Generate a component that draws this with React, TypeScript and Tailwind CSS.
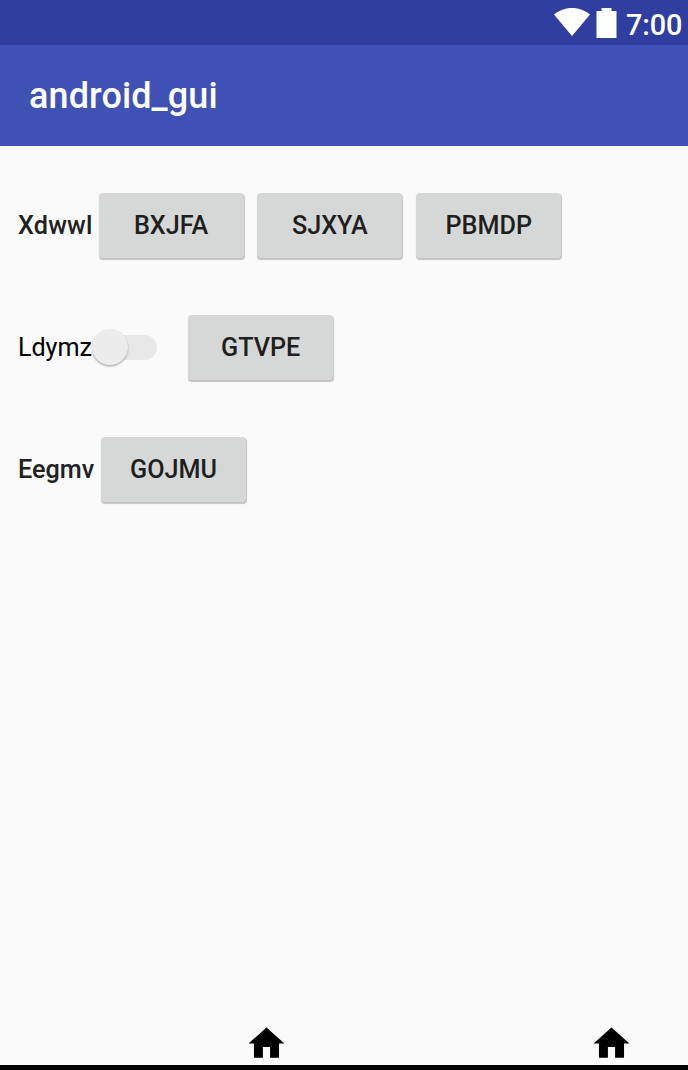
import React from 'react';

function Button({ label, className = '' }: { label: string; className?: string }) {
  return (
    <button
      className={`flex h-[65px] w-[145px] shrink-0 items-center justify-center rounded-[4px] bg-[#d6d8d7] text-[25.2px] leading-none font-medium text-[#1f1f1f] shadow-[0.5px_1.5px_1px_rgba(0,0,0,0.22)] ${className}`}
    >
      {label}
    </button>
  );
}

function Label({ text, className }: { text: string; className: string }) {
  return <span className={`shrink-0 text-[25.2px] leading-none ${className}`}>{text}</span>;
}

function HomeIcon() {
  return (
    <svg className="mt-[0.4px] h-[43px] w-[43px]" viewBox="0 0 24 24" fill="#000">
      <path d="M10 20v-6h4v6h5v-8h3L12 3 2 12h3v8z" />
    </svg>
  );
}

export default function App() {
  return (
    <div className="flex h-[1070px] w-[688px] flex-col overflow-hidden bg-[#fafafa] font-['Roboto',sans-serif]">
      <div className="flex h-[45px] shrink-0 items-start justify-end bg-[#303f9f] pr-[6px] text-white">
        <svg className="mt-[8px] h-[28px] w-[36px]" viewBox="0 0 36 28" fill="currentColor">
          <path d="M0 6.5C5 2.4 11 0 18 0s13 2.4 18 6.5L18 28z" />
        </svg>
        <svg className="mt-[8px] ml-[6px] h-[30px] w-[21px]" viewBox="0 0 21 30" fill="currentColor">
          <path d="M5.5 0h10v3h5v27H.5V3h5z" />
        </svg>
        <span className="mt-[11px] ml-[9px] w-[56px] text-[28.8px] leading-[29px] font-medium tracking-[-0.1px]">7:00</span>
      </div>
      <header className="flex h-[101px] shrink-0 items-center bg-[#3f51b5] pl-[29px]">
        <h1 className="text-[36px] leading-none font-medium tracking-[0.1px] text-white">android_gui</h1>
      </header>
      <main className="flex flex-1 flex-col gap-[57px] pt-[47px] pl-[18px]">
        <div className="flex h-[65px] items-center">
          <Label text="Xdwwl" className="w-[81px] font-medium tracking-[0.2px] text-[#212121]" />
          <Button label="BXJFA" className="pr-[1px]" />
          <Button label="SJXYA" className="ml-[13.400px]" />
          <Button label="PBMDP" className="ml-[13.400px] pl-[1px]" />
        </div>
        <div className="flex h-[65px] items-center">
          <Label text="Ldymz" className="w-[73.5px] tracking-[-0.1px] text-black" />
          <div className="flex h-[25px] w-[65px] justify-end">
            <div className="flex h-[25px] w-[47px] items-center rounded-r-full bg-[#e8e8e8]">
              <div className="-mt-[1px] -ml-[18px] h-[36px] w-[36px] shrink-0 rounded-full bg-[#ececec] shadow-[0_1.5px_2px_rgba(0,0,0,0.3)]" />
            </div>
          </div>
          <Button label="GTVPE" className="ml-[31.7px]" />
        </div>
        <div className="flex h-[65px] items-center">
          <Label text="Eegmv" className="w-[83px] font-medium text-[#212121]" />
          <Button label="GOJMU" />
        </div>
      </main>
      <nav className="flex h-[48px] shrink-0 justify-between border-b-[5px] border-black pr-[55px] pl-[245px]">
        <HomeIcon />
        <HomeIcon />
      </nav>
    </div>
  );
}
